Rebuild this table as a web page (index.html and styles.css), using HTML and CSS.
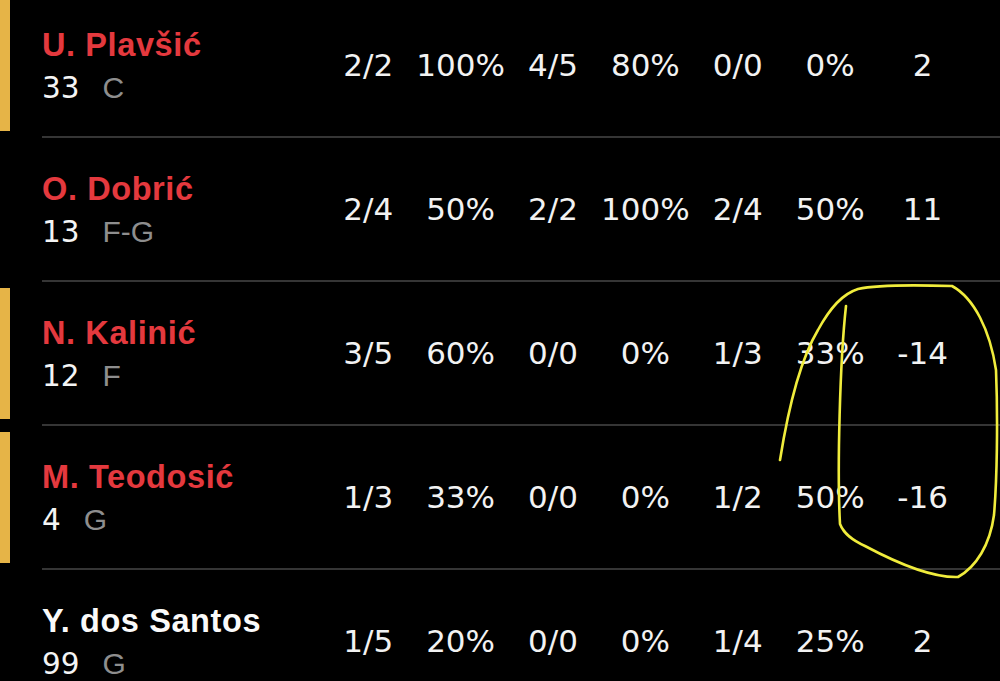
FILE: index.html
```html
<!DOCTYPE html>
<html lang="en">
<head>
<meta charset="utf-8">
<title>Box score</title>
<link rel="stylesheet" href="styles.css">
</head>
<body>
<div class="screen">
  <div class="list">
    <div class="row starter">
      <div class="marker"></div>
      <div class="body">
        <div class="player">
          <div class="name">U. Plavšić</div>
          <div class="meta"><span class="num">33</span><span class="pos">C</span></div>
        </div>
        <div class="stats">
          <span>2/2</span><span>100%</span><span>4/5</span><span>80%</span><span>0/0</span><span>0%</span><span>2</span>
        </div>
      </div>
    </div>
    <div class="row starter-name">
      <div class="marker"></div>
      <div class="body">
        <div class="player">
          <div class="name">O. Dobrić</div>
          <div class="meta"><span class="num">13</span><span class="pos">F-G</span></div>
        </div>
        <div class="stats">
          <span>2/4</span><span>50%</span><span>2/2</span><span>100%</span><span>2/4</span><span>50%</span><span>11</span>
        </div>
      </div>
    </div>
    <div class="row starter">
      <div class="marker"></div>
      <div class="body">
        <div class="player">
          <div class="name">N. Kalinić</div>
          <div class="meta"><span class="num">12</span><span class="pos">F</span></div>
        </div>
        <div class="stats">
          <span>3/5</span><span>60%</span><span>0/0</span><span>0%</span><span>1/3</span><span>33%</span><span>-14</span>
        </div>
      </div>
    </div>
    <div class="row starter">
      <div class="marker"></div>
      <div class="body">
        <div class="player">
          <div class="name">M. Teodosić</div>
          <div class="meta"><span class="num">4</span><span class="pos">G</span></div>
        </div>
        <div class="stats">
          <span>1/3</span><span>33%</span><span>0/0</span><span>0%</span><span>1/2</span><span>50%</span><span>-16</span>
        </div>
      </div>
    </div>
    <div class="row">
      <div class="marker"></div>
      <div class="body">
        <div class="player">
          <div class="name">Y. dos Santos</div>
          <div class="meta"><span class="num">99</span><span class="pos">G</span></div>
        </div>
        <div class="stats">
          <span>1/5</span><span>20%</span><span>0/0</span><span>0%</span><span>1/4</span><span>25%</span><span>2</span>
        </div>
      </div>
    </div>
  </div>
  <svg class="scribble" width="1000" height="681" viewBox="0 0 1000 681" aria-hidden="true">
    <path d="M780 460 C788 410 800 360 818 330 C830 308 842 294 858 289 C880 284 920 285 952 286 C974 298 990 330 996 370 C998 420 997 480 994 515 C990 545 976 567 958 577 C930 578 895 562 865 546 C852 540 844 534 840 524 C837 470 840 360 846 306" fill="none" stroke="#f0ec3c" stroke-width="2.6" stroke-linecap="round" stroke-linejoin="round"/>
  </svg>
</div>
</body>
</html>
```

FILE: styles.css
```css
html, body {
  margin: 0;
  padding: 0;
  background: #000;
}

body {
  width: 1000px;
  height: 681px;
  overflow: hidden;
}

.screen {
  position: relative;
  width: 1000px;
  height: 681px;
  overflow: hidden;
}

.list {
  margin-top: -6px;
  display: flex;
  flex-direction: column;
}

.row {
  display: flex;
  height: 144px;
}

.marker {
  width: 10px;
  margin: 6px 0 7px;
  flex: none;
}

.starter .marker {
  background: #e6b447;
}

.body {
  flex: 1;
  margin-left: 32px;
  border-bottom: 2px solid #353535;
  display: flex;
  align-items: center;
}

.player {
  width: 280px;
  flex: none;
  display: flex;
  flex-direction: column;
  padding-top: 4px;
}

.name {
  font-family: "Liberation Sans", Arial, sans-serif;
  font-weight: 700;
  font-size: 32.5px;
  line-height: 38px;
  letter-spacing: 0.6px;
  color: #fafafa;
}

.starter .name,
.starter-name .name {
  color: #e4393e;
}

.meta {
  display: flex;
  align-items: baseline;
  line-height: 40px;
  margin-top: 4px;
}

.num {
  font-family: "DejaVu Sans", sans-serif;
  font-size: 29.5px;
  color: #f4f4f4;
}

.pos {
  font-family: "Liberation Sans", Arial, sans-serif;
  font-size: 30px;
  color: #8e8e8e;
  margin-left: 23px;
}

.stats {
  display: grid;
  grid-template-columns: repeat(7, 92.4px);
  font-family: "DejaVu Sans", sans-serif;
  font-size: 31px;
  color: #f2f2f2;
  line-height: 40px;
}

.stats span {
  text-align: center;
}

.scribble {
  position: absolute;
  left: 0;
  top: 0;
  pointer-events: none;
}
```
